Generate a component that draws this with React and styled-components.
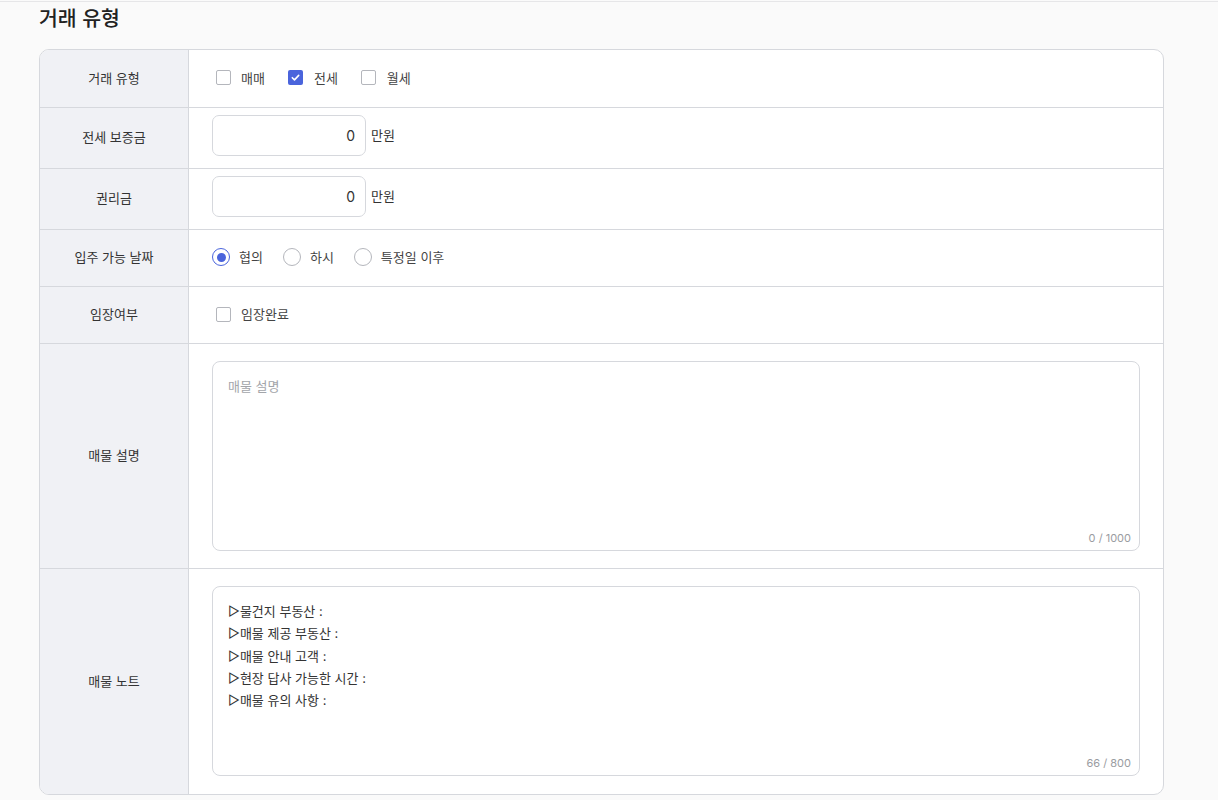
import React from 'react';
import styled, { createGlobalStyle } from 'styled-components';

const GlobalStyle = createGlobalStyle`
  html, body {
    margin: 0;
    padding: 0;
    background: #fafafa;
  }
  body {
    font-family: Inter, "Noto Sans CJK KR", sans-serif;
    color: #333;
  }
  * { box-sizing: border-box; }
`;

const TopRule = styled.div`
  margin-top: 1px;
  height: 1px;
  background: #e6e6e8;
`;

const Page = styled.div`
  padding: 0 54px 6px 39px;
`;

const Title = styled.h2`
  margin: 0;
  padding-top: 3px;
  height: 47px;
  font-size: 20.5px;
  line-height: 28px;
  font-weight: 500;
  color: #222;
`;

const Card = styled.div`
  width: 1125px;
  background: #fff;
  border: 1px solid #d6d8dd;
  border-radius: 10px;
  overflow: hidden;
`;

const Row = styled.div`
  display: grid;
  grid-template-columns: 149px 1fr;
  border-bottom: ${p => (p.$last ? 'none' : '1px solid #d6d8dd')};
  min-height: ${p => p.$h}px;
`;

const Label = styled.div`
  background: #f0f1f5;
  border-right: 1px solid #d6d8dd;
  display: flex;
  align-items: center;
  justify-content: center;
  padding-bottom: 3px;
  font-size: 13px;
  color: #333;
`;

const Cell = styled.div`
  display: flex;
  align-items: ${p => (p.$top ? 'flex-start' : 'center')};
  padding: ${p => p.$pad || '0 23px 3px'};
  gap: 20px;
  font-size: 13px;
`;

const Option = styled.label`
  display: flex;
  align-items: center;
  gap: ${p => p.$gap || 9}px;
  color: #444;
  font-size: 13px;
  cursor: pointer;
`;

const BoxWrap = styled.span`
  display: inline-flex;
  width: 18px;
  height: 18px;
  align-items: center;
  justify-content: center;
  margin-left: 2px;
  margin-bottom: -1px;
`;

const Box = styled.span`
  width: 15px;
  height: 15px;
  border-radius: 2px;
  border: ${p => (p.$on ? 'none' : '1.5px solid #b4b6bc')};
  background: ${p => (p.$on ? '#4a64dc' : '#fff')};
  display: flex;
  align-items: center;
  justify-content: center;
`;

const Radio = styled.span`
  width: 18px;
  height: 18px;
  margin-bottom: -1px;
  border-radius: 50%;
  border: 1.5px solid ${p => (p.$on ? '#4a64dc' : '#b4b6bc')};
  display: flex;
  align-items: center;
  justify-content: center;
  &::after {
    content: '';
    width: 9px;
    height: 9px;
    border-radius: 50%;
    background: ${p => (p.$on ? '#4a64dc' : 'transparent')};
  }
`;

const InputGroup = styled.div`
  display: flex;
  align-items: center;
  gap: 5px;
`;

const Input = styled.input`
  width: 154px;
  height: 41px;
  border: 1px solid #d6d8dd;
  border-radius: 7px;
  padding: 0 10px;
  text-align: right;
  font-family: Inter, "Noto Sans CJK KR", sans-serif;
  font-size: 14px;
  color: #333;
  outline: none;
`;

const Unit = styled.span`
  font-size: 13px;
  color: #333;
  margin-bottom: 2px;
`;

const AreaWrap = styled.div`
  position: relative;
  width: 100%;
`;

const TextArea = styled.textarea`
  display: block;
  width: 100%;
  height: 190px;
  border: 1px solid #d6d8dd;
  border-radius: 8px;
  padding: 13px 15px;
  resize: none;
  font-family: Inter, "Noto Sans CJK KR", sans-serif;
  font-size: 13px;
  line-height: 22.3px;
  color: #333;
  outline: none;
  &::placeholder {
    color: #a3a5aa;
  }
`;

const Counter = styled.span`
  position: absolute;
  right: 9px;
  bottom: 6px;
  font-size: 11px;
  color: #9a9ca1;
`;

function CheckIcon() {
  return (
    <svg width="11" height="11" viewBox="0 0 12 12" fill="none">
      <path d="M2.5 6.2l2.4 2.4 4.6-4.9" stroke="#fff" strokeWidth="1.7" strokeLinecap="round" strokeLinejoin="round" />
    </svg>
  );
}

function Check({ on, children }) {
  return (
    <Option $gap={9}>
      <BoxWrap>
        <Box $on={on}>{on && <CheckIcon />}</Box>
      </BoxWrap>
      {children}
    </Option>
  );
}

function RadioOption({ on, children }) {
  return (
    <Option $gap={9}>
      <Radio $on={on} />
      {children}
    </Option>
  );
}

const noteText =
  '▷물건지 부동산 :\n▷매물 제공 부동산 :\n▷매물 안내 고객 :\n▷현장 답사 가능한 시간 :\n▷매물 유의 사항 :';

export default function App() {
  return (
    <>
      <GlobalStyle />
      <TopRule />
      <Page>
        <Title>거래 유형</Title>
        <Card>
          <Row $h={58}>
            <Label>거래 유형</Label>
            <Cell>
              <Check>매매</Check>
              <Check on>전세</Check>
              <Check>월세</Check>
            </Cell>
          </Row>
          <Row $h={61}>
            <Label>전세 보증금</Label>
            <Cell $pad="7px 23px 12px">
              <InputGroup>
                <Input defaultValue="0" />
                <Unit>만원</Unit>
              </InputGroup>
            </Cell>
          </Row>
          <Row $h={61}>
            <Label>권리금</Label>
            <Cell $pad="7px 23px 12px">
              <InputGroup>
                <Input defaultValue="0" />
                <Unit>만원</Unit>
              </InputGroup>
            </Cell>
          </Row>
          <Row $h={57}>
            <Label>입주 가능 날짜</Label>
            <Cell>
              <RadioOption on>협의</RadioOption>
              <RadioOption>하시</RadioOption>
              <RadioOption>특정일 이후</RadioOption>
            </Cell>
          </Row>
          <Row $h={57}>
            <Label>임장여부</Label>
            <Cell>
              <Check>임장완료</Check>
            </Cell>
          </Row>
          <Row $h={225}>
            <Label>매물 설명</Label>
            <Cell $top $pad="17px 23px">
              <AreaWrap>
                <TextArea placeholder="매물 설명" />
                <Counter>0 / 1000</Counter>
              </AreaWrap>
            </Cell>
          </Row>
          <Row $h={225} $last>
            <Label>매물 노트</Label>
            <Cell $top $pad="17px 23px 18px">
              <AreaWrap>
                <TextArea defaultValue={noteText} />
                <Counter>66 / 800</Counter>
              </AreaWrap>
            </Cell>
          </Row>
        </Card>
      </Page>
    </>
  );
}
